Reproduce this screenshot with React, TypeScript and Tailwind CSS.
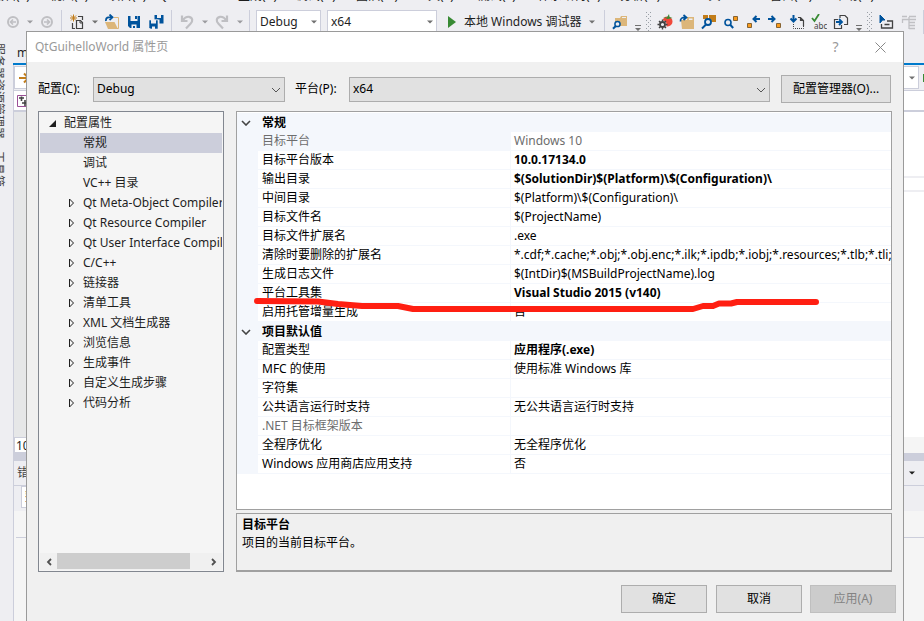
import type { ReactNode } from 'react';

const menuItems = [
  { label: '编辑(E)', w: 'w-[58px]' },
  { label: '视图(V)', w: 'w-[58px]' },
  { label: '项目(P)', w: 'w-[50px]' },
  { label: 'Qt VS Tools', w: 'w-[80px]' },
  { label: '生成(B)', w: 'w-[58px]' },
  { label: '调试(D)', w: 'w-[60px]' },
  { label: '团队(M)', w: 'w-[60px]' },
  { label: '工具(T)', w: 'w-[62px]' },
  { label: '测试(S)', w: 'w-[60px]' },
  { label: '体系结构(C)', w: 'w-[82px]' },
  { label: '分析(N)', w: 'w-[66px]' },
  { label: 'R 工具', w: 'w-[84px]' },
  { label: '窗口(W)', w: 'w-[64px]' },
  { label: '帮助(H)', w: 'w-[68px]' },
];

type TreeItem = { label: string; expandable?: boolean; selected?: boolean };
const tree: TreeItem[] = [
  { label: '常规', selected: true },
  { label: '调试' },
  { label: 'VC++ 目录' },
  { label: 'Qt Meta-Object Compiler', expandable: true },
  { label: 'Qt Resource Compiler', expandable: true },
  { label: 'Qt User Interface Compiler', expandable: true },
  { label: 'C/C++', expandable: true },
  { label: '链接器', expandable: true },
  { label: '清单工具', expandable: true },
  { label: 'XML 文档生成器', expandable: true },
  { label: '浏览信息', expandable: true },
  { label: '生成事件', expandable: true },
  { label: '自定义生成步骤', expandable: true },
  { label: '代码分析', expandable: true },
];

type Prop = { name: string; value: string; bold?: boolean; nameDim?: boolean; valueDim?: boolean };
const groups: { title: string; props: Prop[] }[] = [
  {
    title: '常规',
    props: [
      { name: '目标平台', value: 'Windows 10', nameDim: true, valueDim: true },
      { name: '目标平台版本', value: '10.0.17134.0', bold: true },
      { name: '输出目录', value: '$(SolutionDir)$(Platform)\\$(Configuration)\\', bold: true },
      { name: '中间目录', value: '$(Platform)\\$(Configuration)\\' },
      { name: '目标文件名', value: '$(ProjectName)' },
      { name: '目标文件扩展名', value: '.exe' },
      { name: '清除时要删除的扩展名', value: '*.cdf;*.cache;*.obj;*.obj.enc;*.ilk;*.ipdb;*.iobj;*.resources;*.tlb;*.tli;*.tlh' },
      { name: '生成日志文件', value: '$(IntDir)$(MSBuildProjectName).log' },
      { name: '平台工具集', value: 'Visual Studio 2015 (v140)', bold: true },
      { name: '启用托管增量生成', value: '否' },
    ],
  },
  {
    title: '项目默认值',
    props: [
      { name: '配置类型', value: '应用程序(.exe)', bold: true },
      { name: 'MFC 的使用', value: '使用标准 Windows 库' },
      { name: '字符集', value: '' },
      { name: '公共语言运行时支持', value: '无公共语言运行时支持' },
      { name: '.NET 目标框架版本', value: '', nameDim: true },
      { name: '全程序优化', value: '无全程序优化' },
      { name: 'Windows 应用商店应用支持', value: '否' },
    ],
  },
];

function Tool({ w, label, children }: { w: string; label: string; children: ReactNode }) {
  return (
    <button aria-label={label} className={`${w} flex h-6 shrink-0 items-center justify-center`}>
      {children}
    </button>
  );
}

function Icon({ children }: { children: ReactNode }) {
  return (
    <svg width="16" height="16" viewBox="0 0 16 16" fill="none" className="shrink-0">
      {children}
    </svg>
  );
}

function Caret({ color = '#717171' }: { color?: string }) {
  return (
    <svg width="6" height="4" viewBox="0 0 6 4" className="shrink-0">
      <path d="M0 0.5h6L3 3.5z" fill={color} />
    </svg>
  );
}

function Sep({ w }: { w: string }) {
  return (
    <div className={`${w} flex h-6 shrink-0 justify-center`}>
      <div className="w-px bg-[#cccedb]" />
    </div>
  );
}

function Overflow({ w }: { w: string }) {
  return (
    <Tool w={w} label="工具栏选项">
      <svg width="6" height="20" viewBox="0 0 6 20">
        <path d="M0 13h6v1H0zM0 16h6L3 19z" fill="#717171" />
      </svg>
    </Tool>
  );
}

function Grip({ w }: { w: string }) {
  const rows = [0, 4, 8, 12, 16];
  return (
    <div className={`${w} flex h-6 shrink-0 items-center justify-center`}>
      <svg width="5" height="20" viewBox="0 0 5 20" fill="#999fa6">
        {rows.map((y) => (
          <g key={y}>
            <rect x="0" y={y} width="1" height="1" />
            <rect x="4" y={y} width="1" height="1" />
            <rect x="2" y={y + 2} width="1" height="1" />
          </g>
        ))}
      </svg>
    </div>
  );
}

function ToolSelect({ value, w, label }: { value: string; w: string; label: string }) {
  return (
    <div className={`${w} relative h-6 shrink-0`}>
      <select
        aria-label={label}
        className="h-full w-full appearance-none border border-[#cccedb] bg-white pl-[3px] text-[#1e1e1e]"
      >
        <option>{value}</option>
      </select>
      <span className="pointer-events-none absolute inset-y-0 right-1 flex items-center">
        <Caret />
      </span>
    </div>
  );
}

function Toolbar() {
  return (
    <div className="mt-[6px] flex h-6 shrink-0 pl-[3px]">
      <Tool w="w-5" label="后退">
        <Icon>
          <circle cx="8" cy="8" r="5" stroke="#bfbfc3" strokeWidth="2" />
          <path d="M11 8H6M8 5.5L5.5 8 8 10.5" stroke="#bfbfc3" strokeWidth="1.6" />
        </Icon>
      </Tool>
      <Tool w="w-[14px]" label="后退历史"><Caret color="#9b9b9f" /></Tool>
      <Tool w="w-5" label="前进">
        <Icon>
          <circle cx="8" cy="8" r="5" stroke="#bfbfc3" strokeWidth="2" />
          <path d="M5 8h5M8 5.5L10.500 8 8 10.5" stroke="#bfbfc3" strokeWidth="1.6" />
        </Icon>
      </Tool>
      <Sep w="w-2" />
      <Tool w="w-6" label="新建项目">
        <Icon>
          <path d="M4.500 0.500v7M1 4h7M2 1.500l5 5M7 1.500l-5 5" stroke="#c27d1a" />
          <path d="M9 2.500h4.500V6M3.500 9v5.500H6" stroke="#424242" strokeWidth="1.200" />
          <path d="M7.500 6.500h4l2 2v6h-6z" fill="#eeeef2" stroke="#424242" strokeWidth="1.200" />
          <path d="M11 6.500V9h2.500" stroke="#424242" />
        </Icon>
      </Tool>
      <Tool w="w-3" label="新建选项"><Caret /></Tool>
      <Tool w="w-[22px]" label="打开文件">
        <Icon>
          <path d="M10 3.500h4.500V14.500H11" stroke="#dcb67a" />
          <path d="M1 8h9.500L14 15H4z" fill="#dcb67a" />
          <path d="M2 7C1.500 3.500 4 2.800 8 3.300M5.500 0.500L8.500 3.300 5.500 6" stroke="#00539c" strokeWidth="1.800" />
        </Icon>
      </Tool>
      <Tool w="w-[22px]" label="保存">
        <Icon>
          <path d="M2 2h12v12H4l-2-2z" fill="#00539c" />
          <path d="M4.500 2h7v5h-7zM5.500 10.500h5V14H9v-2H7v2H5.500z" fill="#eeeef2" />
          <path d="M9 2h2v3H9z" fill="#00539c" />
        </Icon>
      </Tool>
      <Tool w="w-[22px]" label="全部保存">
        <Icon>
          <path d="M6.500 1h9v8.500h-4v-4h-5z" fill="#00539c" />
          <path d="M9 1h4v3H9z" fill="#eeeef2" />
          <path d="M1 6h9v9H2.500L1 13.500z" fill="#00539c" stroke="#eeeef2" strokeWidth="0.600" />
          <path d="M3 6h5v3.500H3zM4 12.500h3V15H4z" fill="#eeeef2" />
        </Icon>
      </Tool>
      <Sep w="w-2" />
      <Tool w="w-6" label="撤消">
        <Icon>
          <path d="M3 1.500v5.500h5.500M3.500 6.500C6 3 8 2.500 10 2.800c4 .7 4 4.700 1.500 7L7 14.500" stroke="#bfbfc3" strokeWidth="2.200" />
        </Icon>
      </Tool>
      <Tool w="w-[11px]" label="撤消历史"><Caret color="#9b9b9f" /></Tool>
      <Tool w="w-6" label="重做">
        <Icon>
          <path d="M13 1.500v5.500H7.500M12.500 6.500C10 3 8 2.500 6 2.800c-4 .7-4 4.700-1.500 7L9 14.500" stroke="#bfbfc3" strokeWidth="2.200" />
        </Icon>
      </Tool>
      <Tool w="w-[11px]" label="重做历史"><Caret color="#9b9b9f" /></Tool>
      <Sep w="w-2" />
      <div className="flex gap-[6px] pl-[3px]">
        <ToolSelect value="Debug" w="w-[65px]" label="解决方案配置" />
        <ToolSelect value="x64" w="w-[110px]" label="解决方案平台" />
      </div>
      <button className="flex h-6 w-[163px] shrink-0 items-center gap-[7px] pl-[10px] whitespace-nowrap text-[#1e1e1e]">
        <svg width="10" height="12" viewBox="0 0 10 12"><path d="M1 0l8 6-8 6z" fill="#388a34" /></svg>
        本地 Windows 调试器
        <Caret />
      </button>
      <Sep w="w-2" />
      <Tool w="w-6" label="在文件中查找">
        <Icon>
          <path d="M3 4h5l1-2h6v10H3z" fill="#dcb67a" />
          <path d="M10 3h4v1h-4z" fill="#eeeef2" />
          <circle cx="5.500" cy="10" r="2.600" fill="#eeeef2" stroke="#00539c" strokeWidth="1.500" />
          <path d="M3.800 12L1 14.800" stroke="#00539c" strokeWidth="2" />
        </Icon>
      </Tool>
      <Overflow w="w-3" />
      <Grip w="w-2" />
      <div className="flex pl-[2px]">
        <Tool w="w-[22px]" label="扩展工具">
          <Icon>
            <circle cx="10.500" cy="7.500" r="5" fill="#f0483a" />
            <path d="M6 3l4 .500L12 0l.500 3 3 1-5 1z" fill="#388a34" />
            <circle cx="5.500" cy="10.500" r="4" fill="#eeeef2" />
            <circle cx="5.500" cy="10.500" r="2.500" stroke="#424242" strokeWidth="1.800" />
            <path d="M5.500 5.500v2M5.500 13.500v2M.500 10.500h2M8.500 10.500h2M2 7l1.500 1.500M7.500 12.500L9 14M9 7L7.500 8.500M3.500 12.500L2 14" stroke="#424242" strokeWidth="1.400" />
          </Icon>
        </Tool>
        <Tool w="w-[22px]" label="打开容器">
          <Icon>
            <path d="M2 6h6V3h7v12H3z" fill="#dcb67a" />
            <path d="M10 4.500h3.500v5H10z" fill="#eeeef2" />
            <path d="M10 6h5v4h-5z" fill="#dcb67a" />
            <path d="M1.500 7.500C1 4 3.500 3.300 7 3.500M4.500 1L7.500 3.500 4.500 6" stroke="#00539c" strokeWidth="1.700" />
          </Icon>
        </Tool>
        <Tool w="w-[22px]" label="查找符号">
          <Icon>
            <path d="M2 1h5v4H2zM8 1h7v7H8z" fill="#c27d1a" />
            <circle cx="7" cy="8" r="3" fill="#eeeef2" stroke="#00539c" strokeWidth="1.800" />
            <path d="M5 10.500l-4 4" stroke="#00539c" strokeWidth="2" />
          </Icon>
        </Tool>
        <Tool w="w-[22px]" label="查找项">
          <Icon>
            <circle cx="5" cy="8.500" r="3" stroke="#00539c" strokeWidth="1.600" />
            <path d="M7.200 10.800l3 3.200" stroke="#00539c" strokeWidth="2" />
            <path d="M10.500 2.500h4v4h-4z" fill="#f99b1c" stroke="#866332" />
          </Icon>
        </Tool>
        <Tool w="w-[22px]" label="上一个">
          <Icon>
            <path d="M15 5H9M11.500 2L8.500 5l3 3" stroke="#00539c" strokeWidth="2" />
            <path d="M2.500 9.500h4v4h-4z" fill="#f99b1c" stroke="#866332" />
          </Icon>
        </Tool>
        <Tool w="w-[22px]" label="下一个">
          <Icon>
            <path d="M1 5h6M4.500 2l3 3-3 3" stroke="#00539c" strokeWidth="2" />
            <path d="M9.500 9.500h4v4h-4z" fill="#f99b1c" stroke="#866332" />
          </Icon>
        </Tool>
        <Tool w="w-[22px]" label="转到">
          <Icon>
            <path d="M4.500 1v6M1.500 4.500l3 3 3-3" stroke="#00539c" strokeWidth="2" />
            <path d="M9 3.500h2.500l3 3V12M11.500 3.500v3h3" stroke="#424242" strokeWidth="1.200" />
            <path d="M4.500 10v4.500h10V12" stroke="#424242" strokeDasharray="1 1" />
          </Icon>
        </Tool>
        <Tool w="w-[22px]" label="拼写检查">
          <svg width="16" height="16" viewBox="0 0 16 16" fill="none" className="shrink-0">
            <path d="M1 4l2.500 3L8 0" stroke="#388a34" strokeWidth="1.800" />
            <text x="3" y="15" fontSize="8" fontFamily="Noto Sans, sans-serif" fill="#424242">abc</text>
          </svg>
        </Tool>
        <Tool w="w-[22px]" label="切换文件">
          <Icon>
            <path d="M7 4V1.500h5L14.500 4v6.500H11" stroke="#424242" strokeWidth="1.200" />
            <path d="M5 5.500H1.500v9h7V11" stroke="#424242" strokeWidth="1.200" />
            <path d="M3 8h5M6 5l3 3-3 3" stroke="#00539c" strokeWidth="1.800" />
          </Icon>
        </Tool>
      </div>
      <Overflow w="w-[14px]" />
      <Grip w="w-[7px]" />
      <Tool w="w-[26px]" label="选择元素">
        <Icon>
          <path d="M2 1l5 5H4.500L2 9z" fill="#00539c" stroke="#00539c" />
          <path d="M3.500 10v4h11V7H9M6.500 10.500h5" stroke="#424242" strokeWidth="1.300" />
        </Icon>
      </Tool>
      <Tool w="w-5" label="文档大纲">
        <Icon>
          <path d="M1.500 9V5.500h6M8 2.500h7M1 2.500h5M8 5.500h7M8 8.500h6M8 11.500h6M8 14.500h6M8 3v12" stroke="#c0c0c4" strokeWidth="1.300" />
        </Icon>
      </Tool>
      <Sep w="w-2" />
    </div>
  );
}

function Ide() {
  return (
    <div className="flex h-full flex-col bg-[#eeeef2]">
      <nav className="-ml-2 flex h-1 shrink-0 items-end overflow-hidden text-[#1e1e1e]">
        {menuItems.map((m) => (
          <a key={m.label} href="#" className={`${m.w} shrink-0 leading-4 whitespace-nowrap`}>
            {m.label}
          </a>
        ))}
      </nav>
      <Toolbar />
      <div className="flex min-h-0 flex-1">
        <aside className="flex w-[13px] shrink-0 justify-end overflow-hidden pt-[9px] pr-[9px]">
          <div className="flex shrink-0 gap-3 leading-3 whitespace-nowrap text-[#444444] [text-orientation:sideways] [writing-mode:vertical-rl]">
            <span>服务器资源管理器</span>
            <span>工具箱</span>
          </div>
        </aside>
        <main className="flex min-w-0 flex-1 flex-col">
          <div className="flex h-[29px] shrink-0 items-end pb-[2px] pl-1 text-[#1e1e1e]">
            <span className="w-[9px] overflow-hidden">m</span>
          </div>
          <div className="h-[2px] shrink-0 bg-[#007acc]" />
          <div className="flex min-h-0 flex-1 flex-col border-l border-[#cccedb]">
            <div className="flex h-[26px] shrink-0 justify-between border-b border-[#cccedb]">
              <div className="my-px flex w-[600px] items-center border border-[#cccedb] bg-white pl-1">
                <svg width="12" height="12" viewBox="0 0 12 12" fill="none">
                  <path d="M0 6h9M5 1.500L9.500 6 5 10.500" stroke="#c27d1a" strokeWidth="2" />
                </svg>
              </div>
              <div className="my-px flex flex-1 items-center justify-end border border-[#cccedb] bg-white pr-[3px]">
                <Caret />
              </div>
              <div className="flex w-[5px] items-center justify-end">
                <div className="h-2 w-px bg-[#388a34]" />
              </div>
            </div>
            <div className="flex h-[21px] shrink-0 items-center border-b-2 border-[#cccedb] bg-white pl-[3px]">
              <svg width="12" height="12" viewBox="0 0 12 12" fill="none">
                <path d="M.5.5h11v11H.5z" stroke="#9b4f96" />
                <path d="M2 3h5M4.500 1.500V6M5 8h6M8 5v6" stroke="#424242" strokeWidth="1.600" />
              </svg>
            </div>
            <div className="flex min-h-0 flex-1 bg-white">
              <div className="w-4 bg-[#e6e7e8]" />
              <div className="flex-1 pt-16">
                <div className="h-4 border-y-2 border-[#eeeef2]" />
              </div>
            </div>
            <div className="flex h-4 shrink-0 bg-[#f5f5f5]">
              <div className="w-20 border border-[#cccedb] bg-white pl-px leading-4 text-[#1e1e1e]">10</div>
            </div>
            <div className="h-2 shrink-0 bg-[#cccedb]" />
            <div className="flex h-6 shrink-0 items-center justify-between pr-[9px] pl-[3px] text-[#444444]">
              错
              <Caret color="#1e1e1e" />
            </div>
            <div className="h-[26px] shrink-0 border-t border-[#cccedb] pb-[3px] pl-[7px]">
              <div className="h-full w-20 border border-[#cccedb] bg-white pl-[3px] leading-5 text-[#1e1e1e]">整</div>
            </div>
            <div className="h-[110px] shrink-0 bg-[#f5f5f5] pt-[26px] pl-[2px]">
              <div className="h-px bg-[#cccedb]" />
            </div>
          </div>
        </main>
      </div>
    </div>
  );
}

function DialogSelect({ id, value, className }: { id: string; value: string; className: string }) {
  return (
    <div className={`${className} relative h-[25px]`}>
      <select id={id} className="h-full w-full appearance-none border border-[#adadad] bg-[#e1e1e1] pl-[3px] text-black">
        <option>{value}</option>
      </select>
      <svg width="10" height="6" viewBox="0 0 10 6" fill="none" className="pointer-events-none absolute top-[10px] right-1">
        <path d="M1 1l4 4 4-4" stroke="#555" />
      </svg>
    </div>
  );
}

function PropertyTree() {
  return (
    <div className="flex w-[186px] shrink-0 flex-col border border-[#828790] bg-[#f5f5f5] p-px">
      <ul role="tree" aria-label="配置属性" className="flex-1 overflow-hidden text-[#1e1e1e]">
        <li role="treeitem" aria-expanded="true" className="flex h-5 items-center gap-2 pl-[9px] leading-5">
          <svg width="7" height="7" viewBox="0 0 7 7"><path d="M7 0v7H0z" fill="#1e1e1e" /></svg>
          配置属性
        </li>
        {tree.map((t) => (
          <li
            key={t.label}
            role="treeitem"
            aria-selected={!!t.selected}
            className={`flex h-5 items-center pl-7 leading-5 whitespace-nowrap ${t.selected ? 'bg-[#cccedb]' : ''}`}
          >
            <span className="w-[15px] shrink-0">
              {t.expandable && (
                <svg width="7" height="10" viewBox="0 0 7 10" fill="none">
                  <path d="M1.500 1v8l4-4z" stroke="#1e1e1e" />
                </svg>
              )}
            </span>
            {t.label}
          </li>
        ))}
      </ul>
      <div className="flex h-[17px] shrink-0 items-stretch bg-[#f0f0f0]">
        <button aria-label="向左滚动" className="flex w-[17px] items-center justify-center">
          <svg width="6" height="8" viewBox="0 0 6 8" fill="none"><path d="M5 1L2 4l3 3" stroke="#505050" strokeWidth="1.800" /></svg>
        </button>
        <div className="flex-1 pb-px">
          <div className="h-full w-[133px] bg-[#cdcdcd]" />
        </div>
        <button aria-label="向右滚动" className="flex w-[17px] items-center justify-center">
          <svg width="6" height="8" viewBox="0 0 6 8" fill="none"><path d="M1 1l3 3-3 3" stroke="#505050" strokeWidth="1.800" /></svg>
        </button>
      </div>
    </div>
  );
}

function PropertyGrid() {
  return (
    <div className="h-[399px] overflow-hidden border border-[#a0a0a0] bg-white pt-px">
      <table className="w-full table-fixed border-separate border-spacing-0 text-left text-black">
        <colgroup>
          <col className="w-[21px]" />
          <col className="w-[253px]" />
          <col />
        </colgroup>
        {groups.map((g) => (
          <tbody key={g.title}>
            <tr className="h-[19px] bg-[#f4f7fc]">
              <td className="p-0">
                <svg width="10" height="6" viewBox="0 0 10 6" fill="none" className="ml-1">
                  <path d="M1 1l4 4 4-4" stroke="#444" strokeWidth="1.600" />
                </svg>
              </td>
              <th colSpan={2} className="p-0 pl-1 leading-[18px] font-bold">{g.title}</th>
            </tr>
            {g.props.map((p) => (
              <tr key={p.name} className="h-[19px]">
                <td className="bg-[#f4f7fc] p-0" />
                <td
                  className={`border-r border-b border-[#f4f7fc] p-0 pl-1 leading-[18px] whitespace-nowrap ${p.nameDim ? 'text-[#6d6d6d]' : ''} ${p.name === '目标平台' ? 'bg-[#f4f7fc]' : ''}`}
                >
                  {p.name}
                </td>
                <td
                  className={`overflow-hidden border-b border-[#f4f7fc] p-0 pl-[3px] leading-[18px] whitespace-nowrap ${p.bold ? 'font-bold' : ''} ${p.valueDim ? 'text-[#6d6d6d]' : ''}`}
                >
                  {p.value}
                </td>
              </tr>
            ))}
          </tbody>
        ))}
      </table>
    </div>
  );
}

function PropertyDialog() {
  return (
    <section
      role="dialog"
      aria-labelledby="dialog-title"
      className="absolute top-[31px] right-5 left-[26px] h-[640px] border border-[#9a9a9a] bg-[#f0f0f0]"
    >
      <header className="flex h-[30px] items-center bg-white pl-2 text-[#999999]">
        <h1 id="dialog-title" className="flex-1">QtGuihelloWorld 属性页</h1>
        <button aria-label="帮助" className="w-[45px] text-sm">?</button>
        <button aria-label="关闭" className="flex w-[45px] justify-center">
          <svg width="11" height="11" viewBox="0 0 11 11" fill="none"><path d="M.5.5l10 10M10.500.5l-10 10" stroke="#888" /></svg>
        </button>
      </header>
      <div className="flex items-center pt-[13px] pr-3 pl-[11px] text-black">
        <label htmlFor="cfg" className="w-[55px] shrink-0">配置(C):</label>
        <DialogSelect id="cfg" value="Debug" className="w-[192px] shrink-0" />
        <label htmlFor="plat" className="w-[64px] shrink-0 pl-[10px]">平台(P):</label>
        <DialogSelect id="plat" value="x64" className="flex-1" />
        <button className="ml-[11px] h-7 w-[110px] border border-[#adadad] bg-[#e1e1e1]">配置管理器(O)...</button>
      </div>
      <div className="mt-2 flex gap-3 px-[11px]">
        <PropertyTree />
        <div className="flex min-w-0 flex-1 flex-col gap-[3px]">
          <PropertyGrid />
          <div className="h-[59px] border border-b-2 border-[#a0a0a0] px-[5px] pt-[2px] leading-[18px] text-black">
            <h2 className="font-bold">目标平台</h2>
            <p>项目的当前目标平台。</p>
          </div>
        </div>
      </div>
      <footer className="mt-[13px] flex justify-end pr-[7px] text-black">
        <button className="h-7 w-[86px] border border-[#adadad] bg-[#e1e1e1]">确定</button>
        <button className="mr-2 ml-[9px] h-7 w-[86px] border border-[#adadad] bg-[#e1e1e1]">取消</button>
        <button disabled className="h-7 w-[86px] border border-[#bfbfbf] bg-[#cccccc] text-[#838383]">应用(A)</button>
      </footer>
      <svg
        width="568"
        height="16"
        viewBox="0 0 568 16"
        fill="none"
        className="pointer-events-none absolute top-[265px] left-[226px]"
      >
        <path
          d="M4 4L65 4.500 85 7 109 9H145L160 12H440L450 9H460L466 6.500H478L484 5H563"
          stroke="#ff1f12"
          strokeWidth="6"
          strokeLinecap="round"
          strokeLinejoin="round"
        />
      </svg>
    </section>
  );
}

export default function App() {
  return (
    <div className="relative h-screen overflow-hidden font-['Noto_Sans','Noto_Sans_CJK_SC',sans-serif] text-xs">
      <Ide />
      <PropertyDialog />
    </div>
  );
}
